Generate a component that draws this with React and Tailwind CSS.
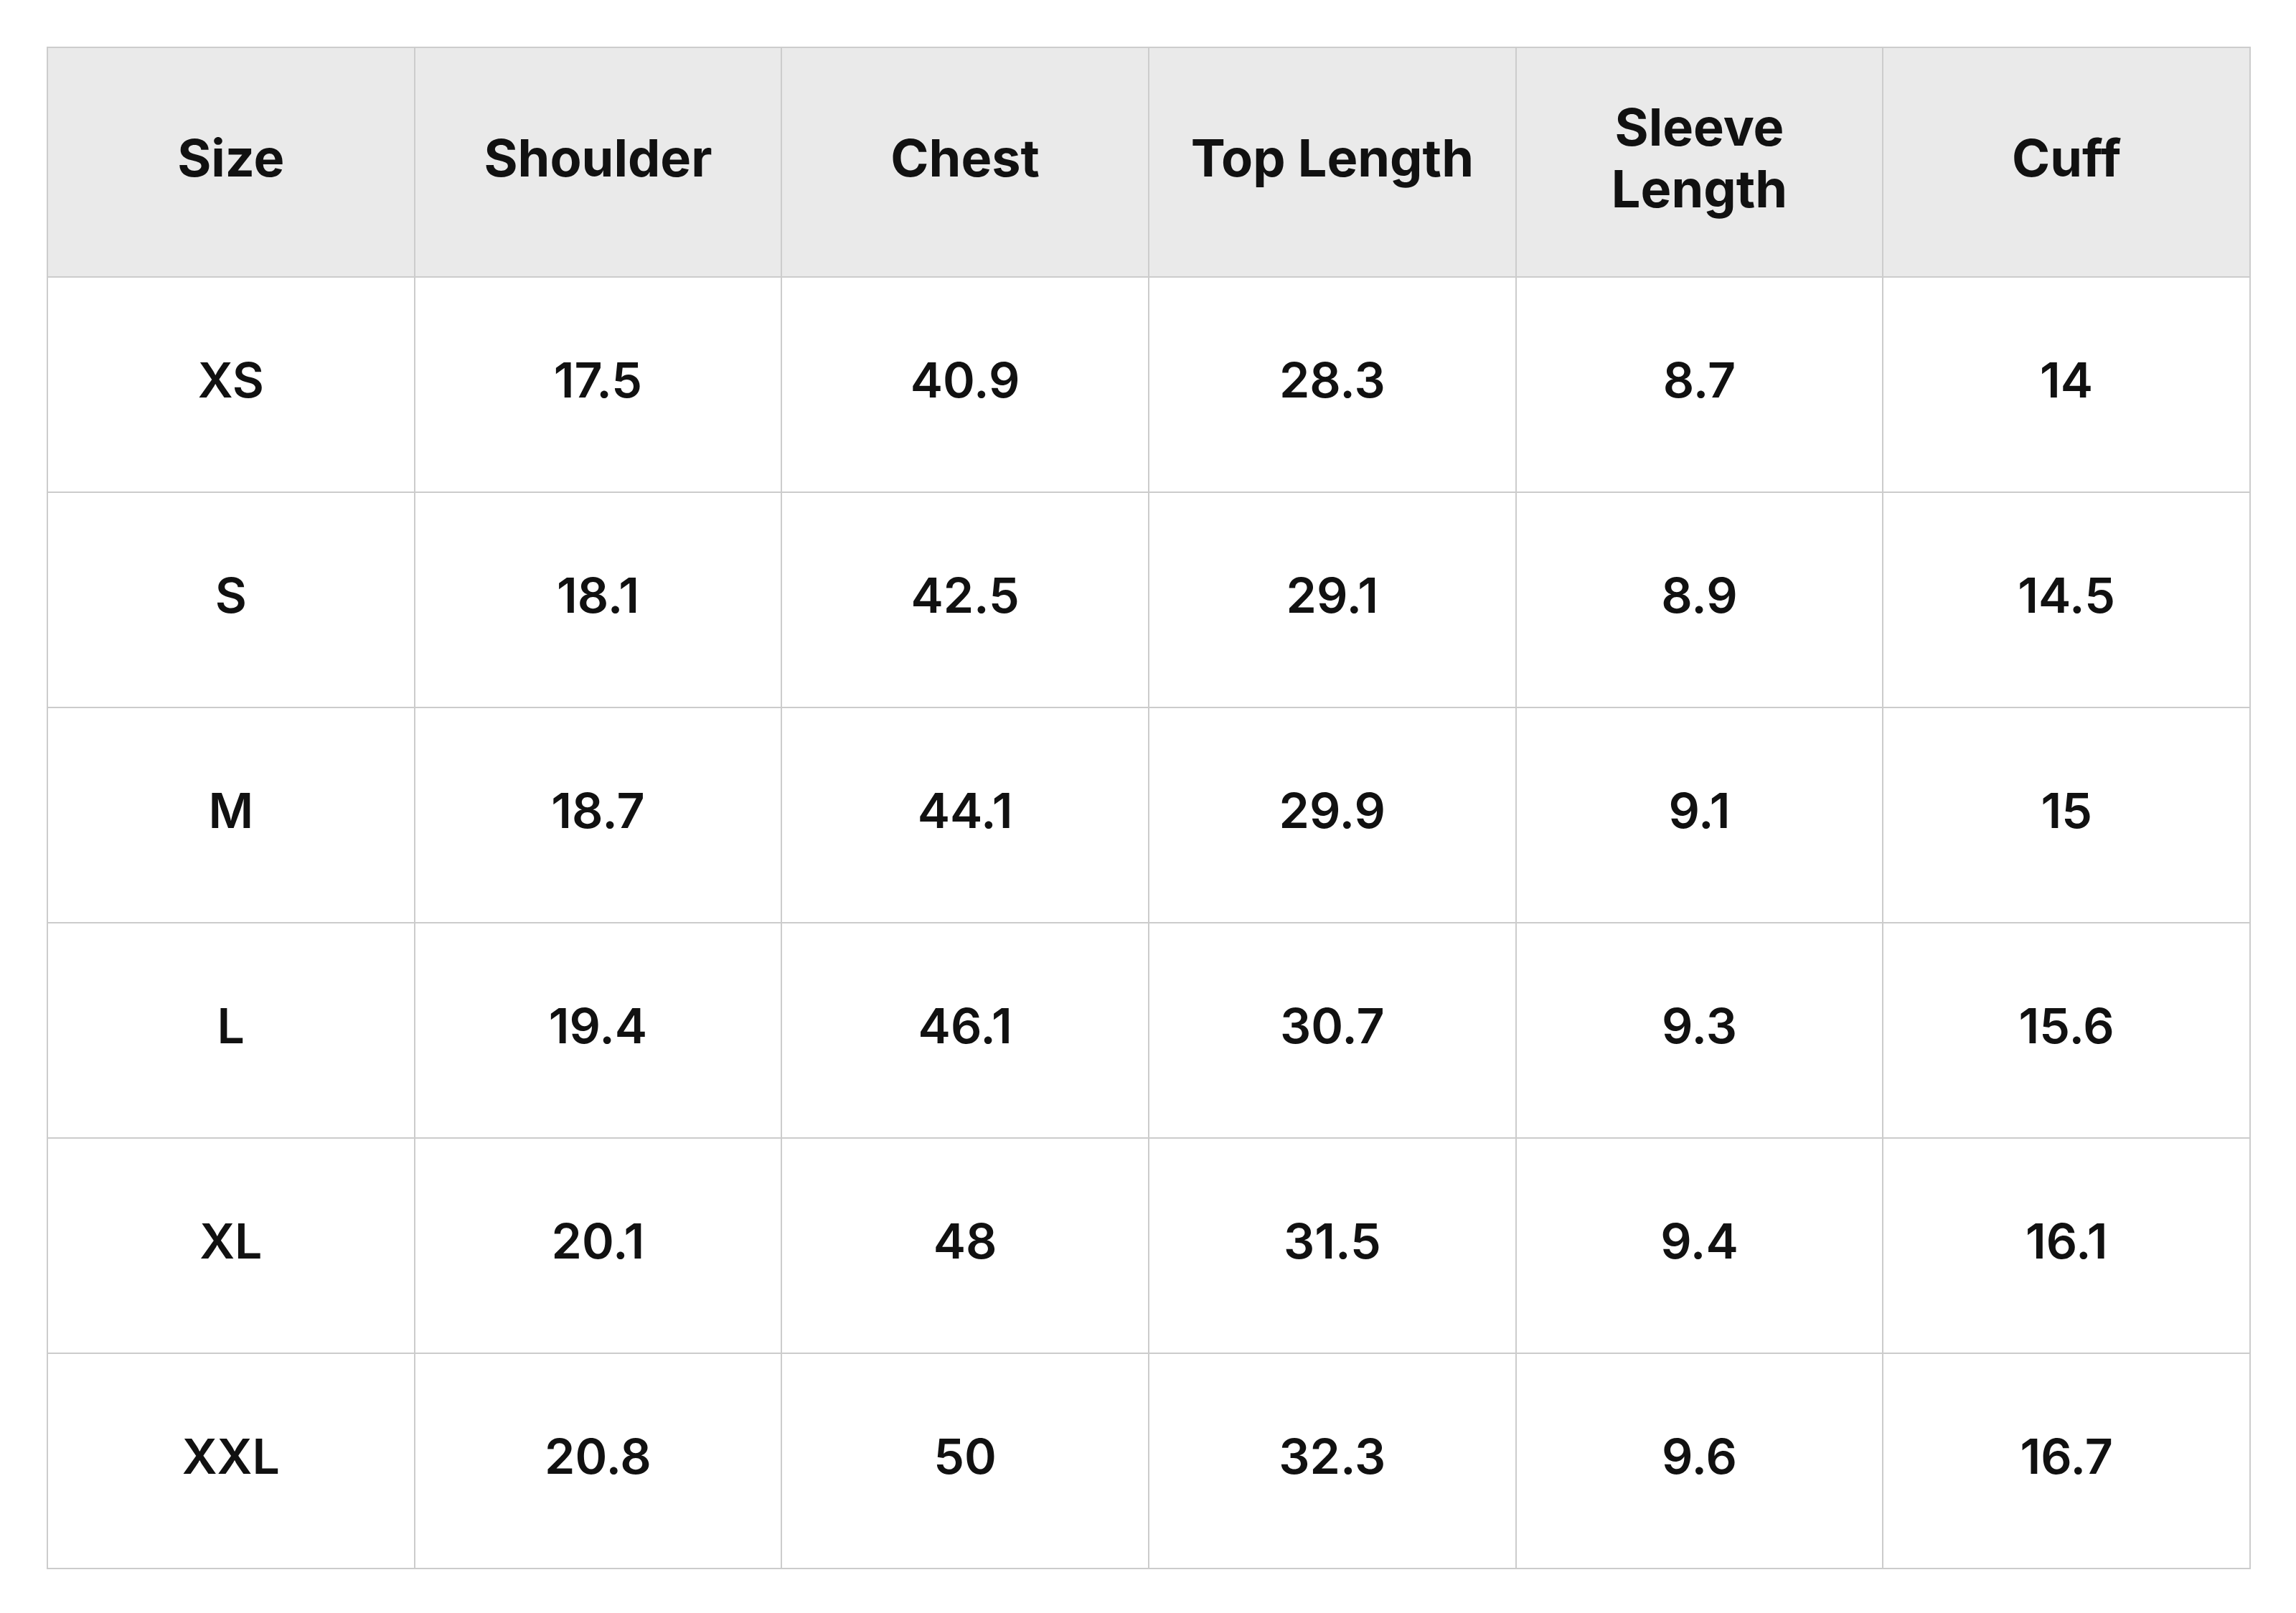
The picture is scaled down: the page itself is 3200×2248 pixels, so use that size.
const headers = ['Size', 'Shoulder', 'Chest', 'Top Length', 'Sleeve Length', 'Cuff'];

const rows = [
  ['XS', '17.5', '40.9', '28.3', '8.7', '14'],
  ['S', '18.1', '42.5', '29.1', '8.9', '14.5'],
  ['M', '18.7', '44.1', '29.9', '9.1', '15'],
  ['L', '19.4', '46.1', '30.7', '9.3', '15.6'],
  ['XL', '20.1', '48', '31.5', '9.4', '16.1'],
  ['XXL', '20.8', '50', '32.3', '9.6', '16.7'],
];

export default function App() {
  return (
    <div className="min-h-[2248px] w-[3200px] bg-white pt-[65px] pl-[65px] text-[#111111] font-['Inter','Noto_Sans',sans-serif]">
      <table className="w-[3072px] table-fixed border-collapse border-2 border-[#cccccc]">
        <thead>
          <tr className="h-[320px] bg-[#eaeaea]">
            {headers.map((h) => (
              <th
                key={h}
                className="border-2 border-[#cccccc] px-[40px] pb-[12px] text-center text-[72px] font-bold leading-[86px]"
              >
                {h}
              </th>
            ))}
          </tr>
        </thead>
        <tbody>
          {rows.map((row) => (
            <tr key={row[0]} className="h-[300px]">
              {row.map((cell, i) => (
                <td
                  key={i}
                  className="border-2 border-[#cccccc] pb-[14px] text-center text-[68px] font-semibold"
                >
                  {cell}
                </td>
              ))}
            </tr>
          ))}
        </tbody>
      </table>
    </div>
  );
}
